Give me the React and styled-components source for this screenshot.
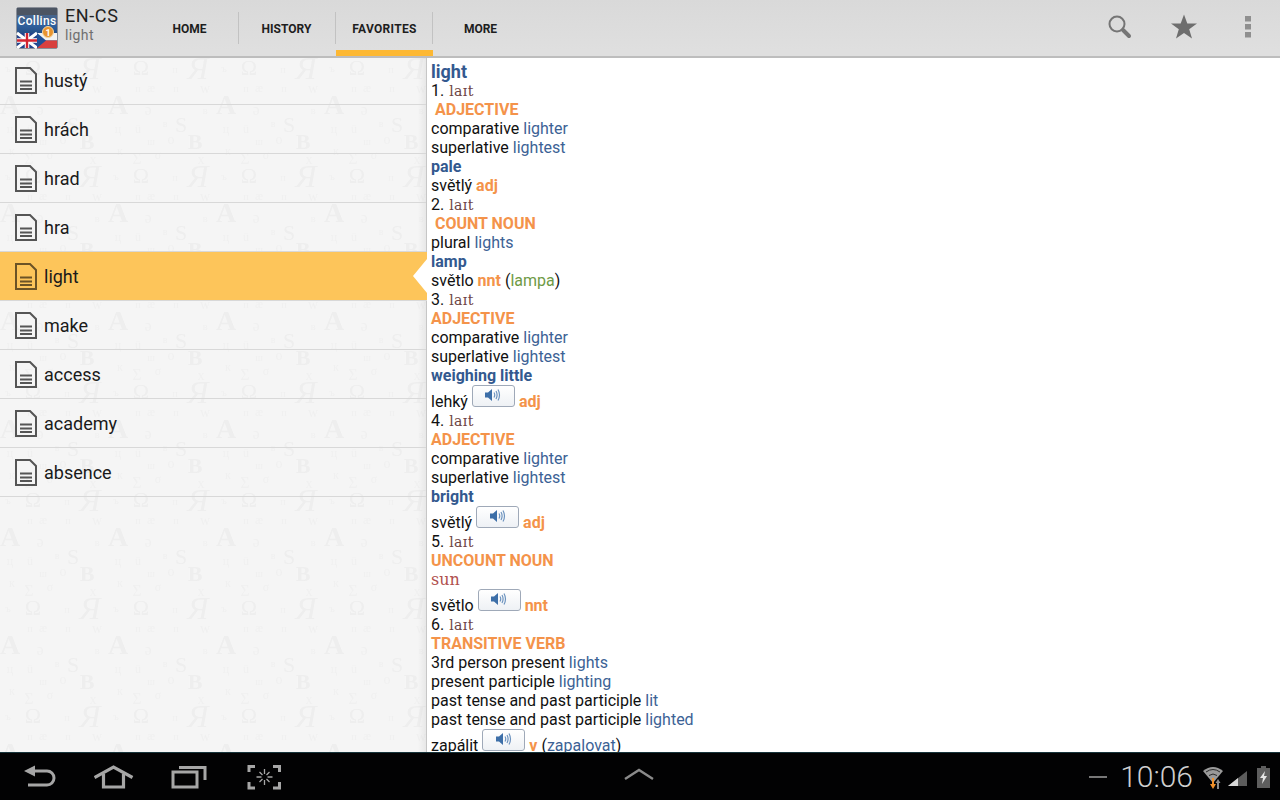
import React from "react";
import styled, { createGlobalStyle } from "styled-components";

const Global = createGlobalStyle`
  html, body { margin: 0; padding: 0; background: #000; }
  * { box-sizing: border-box; }
`;

const Screen = styled.div`
  width: 1280px; height: 800px; display: flex; flex-direction: column; overflow: hidden;
  font-family: Roboto, "Liberation Sans", sans-serif; background: #fff;
`;

/* ---------- action bar ---------- */
const ActionBar = styled.header`
  flex: 0 0 56px; display: flex; align-items: stretch; padding-left: 16px;
  background: linear-gradient(#d9d9d9, #dfdfdf 90%);
  border-bottom: 2px solid #bdbdbd;
`;
const Logo = styled.svg`flex: none; width: 42px; height: 42px; margin-top: 7px;`;
const TitleBlock = styled.div`
  width: 77px; margin-left: 7px; padding-top: 6px; display: flex; flex-direction: column;
`;
const Title = styled.div`font-size: 18px; line-height: 20px; color: #222; letter-spacing: .6px;`;
const Subtitle = styled.div`font-size: 14px; line-height: 18px; color: #6f6f6f; letter-spacing: .4px;`;
const Tabs = styled.nav`display: flex; height: 56px;`;
const Tab = styled.div`
  position: relative; width: 97px; height: 56px; display: flex; align-items: center; justify-content: center;
  font-size: 12px; font-weight: 700; color: #1e1e1e; letter-spacing: ${p => (p.$active ? ".3px" : "0")};
  border-bottom: ${p => (p.$active ? "6px solid #fdb833" : "0")};
  padding-top: ${p => (p.$active ? "7px" : "1px")};
  padding-right: ${p => (p.$active ? "0" : "2px")};
  &::after {
    content: ${p => (p.$last ? "none" : '""')};
    position: absolute; right: 0; top: 12px; width: 1px; height: 32px; background: #c2c2c2;
  }
`;
const Actions = styled.div`margin-left: auto; display: flex; height: 54px;`;
const ActionButton = styled.div`width: 64px; display: flex; align-items: center; justify-content: center;`;

/* ---------- body ---------- */
const Main = styled.main`flex: 1; display: flex; min-height: 0;`;
const Sidebar = styled.aside`
  position: relative; flex: 0 0 427px; background: #f5f5f5; overflow: visible;
  border-right: 1px solid #c6c6c6;
`;
const Watermark = styled.svg`position: absolute; inset: 0; width: 426px; height: 696px;`;
const Shade = styled.div`
  position: absolute; top: 0; bottom: 0; right: 0; width: 8px;
  background: linear-gradient(to right, rgba(0,0,0,0), rgba(0,0,0,.055));
`;
const List = styled.ul`position: relative; margin: 0; padding: 0; list-style: none;`;
const Row = styled.li`
  position: relative; height: 49px; display: flex; align-items: center; padding-left: 15px; gap: 7px;
  font-size: 18px; color: #1a1a1a;
  border-bottom: 1px solid #d8d8d8;
  background: ${p => (p.$selected ? "#fdc55a" : "transparent")};
  &:first-child { height: 48px; margin-top: -1px; }
  ${p => p.$selected && `
    margin-right: -1px;
    &::after {
      content: ""; position: absolute; right: 0; top: 7px; width: 14px; height: 34px;
      background: #fff; clip-path: polygon(100% 0, 0 50%, 100% 100%);
    }
  `}
`;
const DocSvg = styled.svg`flex: none; width: 22px; height: 27px; color: ${p => (p.$selected ? "#6b5326" : "#555")};`;

const Content = styled.section`
  flex: 1; min-width: 0; overflow: hidden; padding: 4px 0 0 4px; background: #fff;
  font-size: 16px; line-height: 19px; color: #111;
`;
const Line = styled.div`height: 19px; white-space: pre;`;
const AudioLine = styled.div`height: 26px; display: flex; align-items: flex-end; white-space: pre;`;
const Head = styled(Line)`font-size: 18px; font-weight: 700; color: #33598f;`;
const Sense = styled(Line)`font-weight: 700; color: #33598f;`;
const PosHead = styled(Line)`font-weight: 700; color: #f4934a; padding-left: ${p => (p.$indent ? "4px" : "0")};`;
const Pos = styled.span`font-weight: 700; color: #f4934a;`;
const Ref = styled.span`color: #3c6295;`;
const Green = styled.span`color: #6e9a45;`;
const Phon = styled.span`font-family: "DejaVu Serif", serif; font-size: 14px; color: #6d4444; letter-spacing: .4px; margin-left: 1px;`;
const Sun = styled(Line)`font-family: "DejaVu Serif", serif; font-size: 16px; color: #b0504e;`;
const Speaker = styled.span`
  width: 43px; height: 22px; margin: 0 4px 4px 4px; flex: none; display: flex; align-items: center; justify-content: center;
  padding-bottom: 3px; border: 1px solid #9fa9b8; border-radius: 3px;
  background: linear-gradient(#ffffff, #eef1f5);
`;

/* ---------- system bar ---------- */
const SystemBar = styled.footer`
  flex: 0 0 48px; position: relative; display: flex; align-items: center; background: #020203;
  border-top: 1px solid #17343b; padding-left: 2px;
`;
const NavKey = styled.div`width: 75px; height: 47px; display: flex; align-items: center; justify-content: center;`;
const Up = styled.svg`position: absolute; left: 622px; top: 14px;`;
const Tray = styled.div`margin-left: auto; display: flex; align-items: center; height: 47px; padding-right: 10px;`;
const Dash = styled.span`width: 18px; height: 2px; background: #777; margin-right: 13px;`;
const Clock = styled.span`font-size: 30px; font-weight: 300; color: #cfcfcf; line-height: 47px; margin-right: 7px;`;
const Battery = styled.svg`margin-left: 9px;`;

const tile = [
  ["æ", 43, 9, 12], ["п", 68, 9, 10], ["w", 97, 10, 14], ["п", 30, 9, 10],
  ["A", 10, 31, 28, "700"], ["ə", 40, 32, 16], ["в", 97, 31, 11],
  ["ц", 10, 50, 12], ["ü", 30, 50, 12], ["в", 57, 44, 10], ["S", 73, 49, 22],
  ["ш", 43, 62, 10], ["o", 63, 61, 14], ["B", 87, 66, 22, "700"],
  ["к", 12, 72, 12], ["Σ", 29, 81, 16], ["σ", 50, 76, 12], ["x", 93, 81, 14],
  ["Ω", 33, 100, 22], ["п", 67, 98, 11], ["Я", 90, 104, 32, "400", "italic"], ["ъ", 8, 97, 11],
];

const Doc = ({ selected }) => (
  <DocSvg $selected={selected} viewBox="0 0 22 27" fill="none" stroke="currentColor">
    <path d="M1 1H15L21 7V26H1Z" strokeWidth="2" />
    <path d="M5 14.5H17M5 18.5H17M5 22H17" strokeWidth="1.8" />
  </DocSvg>
);

const Sound = () => (
  <svg width="16" height="14" viewBox="0 0 16 14">
    <path d="M0 4.5H3L7 1V13L3 9.5H0Z" fill="#3d6fa8" />
    <path d="M9 4.5Q10.5 7 9 9.5M11 3Q13.2 7 11 11M13 1.5Q16 7 13 12.5" fill="none" stroke="#6d93bf" strokeWidth="1.2" />
  </svg>
);

const Audio = ({ word, children }) => (
  <AudioLine>{word}<Speaker><Sound /></Speaker>{children}</AudioLine>
);

const CollinsLogo = () => (
  <Logo viewBox="0 0 42 42">
    <defs>
      <linearGradient id="lg" x1="0" y1="0" x2="0" y2="1">
        <stop offset="0" stopColor="#5a6a80" />
        <stop offset=".45" stopColor="#2f5f9c" />
        <stop offset="1" stopColor="#102a58" />
      </linearGradient>
    </defs>
    <rect x="0.5" y="0.5" width="41" height="41" rx="2" fill="url(#lg)" stroke="#8a8f98" />
    <rect x="1" y="1" width="40" height="7" fill="#4c5563" />
    <text x="21" y="18" textAnchor="middle" fontFamily="Roboto, sans-serif" fontWeight="500" fontSize="12" letterSpacing=".3" fill="#fff">Collins</text>
    <rect x="1" y="26" width="20" height="15" fill="#23438c" />
    <path d="M1 26L21 41M21 26L1 41" stroke="#fff" strokeWidth="3" />
    <path d="M11 26V41M1 33.5H21" stroke="#fff" strokeWidth="4.5" />
    <path d="M11 26V41M1 33.5H21" stroke="#d3232f" strokeWidth="2.4" />
    <path d="M21 26H41V33.5H21Z" fill="#f2f2f2" />
    <path d="M21 33.5H41V41H21Z" fill="#d8403f" />
    <path d="M21 26L30 33.5L21 41Z" fill="#1f4f96" />
    <circle cx="32" cy="25" r="5.5" fill="#e8942f" stroke="#f5d7a6" />
    <text x="32" y="28.5" textAnchor="middle" fontFamily="Roboto, sans-serif" fontWeight="700" fontSize="9" fill="#fff">1</text>
  </Logo>
);

const words = ["hustý", "hrách", "hrad", "hra", "light", "make", "access", "academy", "absence"];

export default function App() {
  return (
    <Screen>
      <Global />
      <ActionBar>
        <CollinsLogo />
        <TitleBlock>
          <Title>EN-CS</Title>
          <Subtitle>light</Subtitle>
        </TitleBlock>
        <Tabs>
          <Tab>HOME</Tab>
          <Tab>HISTORY</Tab>
          <Tab $active>FAVORITES</Tab>
          <Tab $last>MORE</Tab>
        </Tabs>
        <Actions>
          <ActionButton>
            <svg width="28" height="28" viewBox="0 0 28 28" fill="none">
              <circle cx="11" cy="11" r="7.5" stroke="#757575" strokeWidth="2" />
              <path d="M17 17L23 23" stroke="#757575" strokeWidth="4" strokeLinecap="round" />
            </svg>
          </ActionButton>
          <ActionButton>
            <svg width="28" height="28" viewBox="0 0 28 28">
              <path d="M14 1.5L17.3 10.5H27L19.2 16.3L22 25.5L14 20L6 25.5L8.8 16.3L1 10.5H10.7Z" fill="#6e6e6e" />
            </svg>
          </ActionButton>
          <ActionButton>
            <svg width="8" height="24" viewBox="0 0 8 24" fill="#8f8f8f">
              <rect x="1" y="1" width="6" height="5.5" />
              <rect x="1" y="9" width="6" height="5.5" />
              <rect x="1" y="17" width="6" height="5.5" />
            </svg>
          </ActionButton>
        </Actions>
      </ActionBar>

      <Main>
        <Sidebar>
          <Watermark aria-hidden="true">
            <defs>
              <pattern id="glyphs" x="0" y="25" width="108" height="108" patternUnits="userSpaceOnUse">
                {tile.map(([g, x, y, s, w, st], i) => (
                  <text key={i} x={x} y={y} textAnchor="middle" fontFamily="Liberation Serif, serif" fontSize={s}
                    fontWeight={w || "400"} fontStyle={st || "normal"} fill={s > 18 ? "#eeeeee" : "#f0f0f0"}>{g}</text>
                ))}
              </pattern>
            </defs>
            <rect width="426" height="696" fill="url(#glyphs)" />
          </Watermark>
          <Shade />
          <List>
            {words.map(w => (
              <Row key={w} $selected={w === "light"}>
                <Doc selected={w === "light"} />
                {w}
              </Row>
            ))}
          </List>
        </Sidebar>

        <Content>
          <Head>light</Head>
          <Line>1. <Phon>laɪt</Phon></Line>
          <PosHead $indent>ADJECTIVE</PosHead>
          <Line>comparative <Ref>lighter</Ref></Line>
          <Line>superlative <Ref>lightest</Ref></Line>
          <Sense>pale</Sense>
          <Line>světlý <Pos>adj</Pos></Line>
          <Line>2. <Phon>laɪt</Phon></Line>
          <PosHead $indent>COUNT NOUN</PosHead>
          <Line>plural <Ref>lights</Ref></Line>
          <Sense>lamp</Sense>
          <Line>světlo <Pos>nnt</Pos> (<Green>lampa</Green>)</Line>
          <Line>3. <Phon>laɪt</Phon></Line>
          <PosHead>ADJECTIVE</PosHead>
          <Line>comparative <Ref>lighter</Ref></Line>
          <Line>superlative <Ref>lightest</Ref></Line>
          <Sense>weighing little</Sense>
          <Audio word="lehký"><Pos>adj</Pos></Audio>
          <Line>4. <Phon>laɪt</Phon></Line>
          <PosHead>ADJECTIVE</PosHead>
          <Line>comparative <Ref>lighter</Ref></Line>
          <Line>superlative <Ref>lightest</Ref></Line>
          <Sense>bright</Sense>
          <Audio word="světlý"><Pos>adj</Pos></Audio>
          <Line>5. <Phon>laɪt</Phon></Line>
          <PosHead>UNCOUNT NOUN</PosHead>
          <Sun>sun</Sun>
          <Audio word="světlo"><Pos>nnt</Pos></Audio>
          <Line>6. <Phon>laɪt</Phon></Line>
          <PosHead>TRANSITIVE VERB</PosHead>
          <Line>3rd person present <Ref>lights</Ref></Line>
          <Line>present participle <Ref>lighting</Ref></Line>
          <Line>past tense and past participle <Ref>lit</Ref></Line>
          <Line>past tense and past participle <Ref>lighted</Ref></Line>
          <Audio word="zapálit"><Pos>v</Pos> (<Ref>zapalovat</Ref>)</Audio>
        </Content>
      </Main>

      <SystemBar>
        <NavKey>
          <svg width="40" height="30" viewBox="0 0 40 30" fill="none" stroke="#a6a6a6" strokeWidth="3">
            <path d="M4 9L15 3.5V14.5Z" fill="#a6a6a6" stroke="none" />
            <path d="M14 9H27A6.5 6.5 0 0 1 27 23H8" />
          </svg>
        </NavKey>
        <NavKey>
          <svg width="42" height="30" viewBox="0 0 42 30" fill="none" stroke="#a6a6a6" strokeWidth="3.2">
            <path d="M0.5 15.5L19.5 5L38.5 15.5" />
            <path d="M9.5 12V25H29.5V12" />
          </svg>
        </NavKey>
        <NavKey>
          <svg width="40" height="30" viewBox="0 0 40 30" fill="none" stroke="#a6a6a6" strokeWidth="3">
            <rect x="3" y="10" width="24" height="15" />
            <path d="M9 5.5H35V18" />
          </svg>
        </NavKey>
        <NavKey>
          <svg width="40" height="30" viewBox="0 0 40 30" fill="none" stroke="#a6a6a6">
            <path d="M4 10V4.5H10M28 4.5H34.5V10M34.5 20V26H28M10 26H4V20" strokeWidth="3" />
            <path d="M19.5 7V12M19.5 18V23M11.5 15H16.5M22.5 15H27.5M14.5 10L17.5 13M24.5 10L21.5 13M14.5 20L17.5 17M24.5 20L21.5 17" strokeWidth="1.3" />
          </svg>
        </NavKey>
        <Up width="34" height="14" viewBox="0 0 34 14" fill="none">
          <path d="M3 12L17 3L31 12" stroke="#8a8a8a" strokeWidth="2.4" />
        </Up>
        <Tray>
          <Dash />
          <Clock>10:06</Clock>
          <svg width="48" height="26" viewBox="0 0 48 26" fill="none">
            <g transform="translate(2 0)">
              <path d="M1 7Q11 -1 21 7L11 19Z" fill="#9a9a9a" />
              <path d="M4 8Q11 3 18 8M7 11.5Q11 8.5 15 11.5" stroke="#2a2a2a" strokeWidth="1" />
              <path d="M10 14H12V20H14L11 25L8 20H10Z" fill="#f0902a" />
              <path d="M15 25V19H13.5L16 15L18.5 19H17V25Z" fill="#8c8c8c" />
            </g>
            <g transform="translate(3 0)">
              <path d="M25 22L44 7V22Z" fill="#5c5c5c" />
              <path d="M25 22L35 14V22Z" fill="#d8d8d8" />
            </g>
          </svg>
          <Battery width="13" height="22" viewBox="0 0 13 22">
            <path d="M4 0H9V2H13V22H0V2H4Z" fill="#5e5e5e" />
            <path d="M8 5L3 12H6L5 18L10 10H7Z" fill="#e4e4e4" />
          </Battery>
        </Tray>
      </SystemBar>
    </Screen>
  );
}
